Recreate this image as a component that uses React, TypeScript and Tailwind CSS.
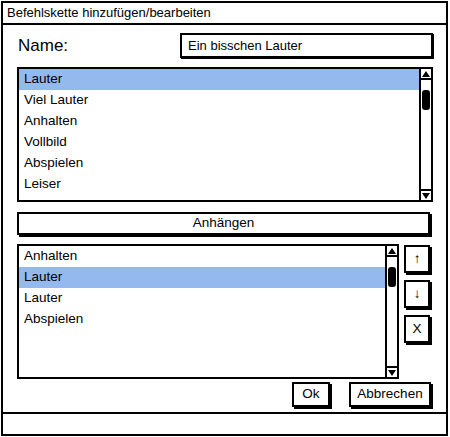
import { ReactNode } from "react";

const font = { fontFamily: '"Liberation Sans", Arial, sans-serif' };

const Scrollbar = () => (
  <div className="flex w-[12px] flex-col border-l-2 border-black bg-white">
    <div className="flex h-[11px] items-center justify-center border-b-2 border-black">
      <div className="h-0 w-0 border-x-[4px] border-b-[6px] border-x-transparent border-b-black" />
    </div>
    <div className="flex-1 px-[1px] pt-[10px]">
      <div className="h-[20px] w-[8px] rounded-[3px] bg-black" />
    </div>
    <div className="flex h-[11px] items-center justify-center border-t-2 border-black">
      <div className="h-0 w-0 border-x-[4px] border-t-[6px] border-x-transparent border-t-black" />
    </div>
  </div>
);

const ListBox = ({ items, selected, className }: { items: string[]; selected: number; className: string }) => (
  <div className={`flex h-[135px] border-2 border-black bg-white ${className}`}>
    <div className="flex-1">
      {items.map((item, i) => (
        <div
          key={i}
          className={`flex h-[21px] items-center pl-[5px] text-[13.5px] text-black ${i === selected ? "bg-[#93b9ee]" : ""}`}
        >
          {item}
        </div>
      ))}
    </div>
    <Scrollbar />
  </div>
);

const Btn = ({ children, className }: { children: ReactNode; className: string }) => (
  <button className={`flex items-center justify-center border-2 border-black bg-white text-[13.5px] text-black shadow-[2px_2px_0_#000] ${className}`}>
    {children}
  </button>
);

export default function App() {
  return (
    <div className="h-[437px] w-[450px] bg-white p-[1px]" style={font}>
      <div className="flex h-[435px] w-[447px] flex-col border-2 border-black">
        {/* Title */}
        <div className="flex h-[22px] items-center border-b-2 border-black pl-[4px] text-[13px] text-black">
          Befehlskette hinzufügen/bearbeiten
        </div>

        <div className="flex flex-1 flex-col pl-[14px] pr-[13px]">
          {/* Name row */}
          <div className="mt-[8px] flex h-[25px] items-center justify-between">
            <span className="pl-[1px] text-[17px] text-black">Name:</span>
            <div className="flex h-[25px] w-[253px] items-center border-2 border-black pl-[6px] text-[13px] text-black shadow-[1px_1px_0_#000]">
              Ein bisschen Lauter
            </div>
          </div>

          <ListBox
            className="mt-[9px]"
            selected={0}
            items={["Lauter", "Viel Lauter", "Anhalten", "Vollbild", "Abspielen", "Leiser"]}
          />

          <Btn className="mt-[10px] h-[23px] w-[413px]">Anhängen</Btn>

          <div className="mt-[9px] flex h-[135px] items-start gap-[5px]">
            <ListBox
              className="w-[382px]"
              selected={1}
              items={["Anhalten", "Lauter", "Lauter", "Abspielen"]}
            />
            <div className="flex flex-col gap-[7px] pt-[1px]">
              <Btn className="h-[28px] w-[26px]">↑</Btn>
              <Btn className="h-[28px] w-[26px]">↓</Btn>
              <Btn className="h-[28px] w-[26px]">X</Btn>
            </div>
          </div>

          <div className="mt-[3px] flex justify-end gap-[19px] pr-[2px]">
            <Btn className="h-[25px] w-[38px]">Ok</Btn>
            <Btn className="h-[25px] w-[82px]">Abbrechen</Btn>
          </div>
        </div>

        {/* Status bar */}
        <div className="h-[22px] border-t-2 border-black" />
      </div>
    </div>
  );
}
